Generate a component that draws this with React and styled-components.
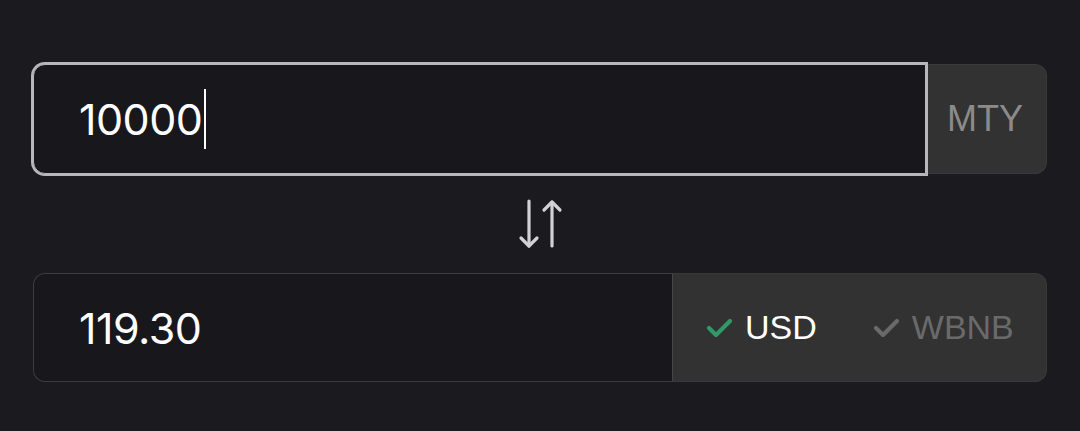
import styled, { createGlobalStyle } from "styled-components"

const GlobalStyle = createGlobalStyle`
    html, body {
        margin: 0;
        padding: 0;
        background: #1b1a1f;
    }
    body {
        font-family: "Inter", "Liberation Sans", sans-serif;
    }
`

const Page = styled.div`
    width: 1080px;
    height: 431px;
    box-sizing: border-box;
    padding: 64px 33px 0 33px;
    background: #1b1a1f;
    display: flex;
    flex-direction: column;
`

const Row = styled.div`
    display: flex;
    height: ${({ $height }) => $height}px;
`

const Field = styled.div`
    flex: ${({ $width }) => ($width ? `0 0 ${$width}px` : "1")};
    box-sizing: border-box;
    display: flex;
    align-items: center;
    padding-left: 45px;
    background: #18171c;
    border: 1px solid ${({ $focused }) => ($focused ? "#b8b7bc" : "#3c3b40")};
    border-right: ${({ $focused }) => ($focused ? "1px solid #b8b7bc" : "none")};
    border-radius: 12px 0 0 12px;
    box-shadow: ${({ $focused }) => ($focused ? "0 0 0 2px #b8b7bc" : "none")};
    position: relative;
    z-index: 1;
    color: #ffffff;
    font-size: 43px;
    font-weight: 400;
    letter-spacing: -0.5px;
`

const Caret = styled.span`
    display: inline-block;
    width: 2px;
    height: 60px;
    background: #ffffff;
    margin-left: 1px;
`

const Addon = styled.div`
    flex: 1;
    box-sizing: border-box;
    display: flex;
    align-items: center;
    justify-content: ${({ $center }) => ($center ? "center" : "flex-start")};
    gap: 56px;
    padding-left: ${({ $center }) => ($center ? "0" : "33px")};
    background: #323232;
    border: 1px solid #3a3a3a;
    border-left: ${({ $center }) => ($center ? "none" : "1px solid #45454a")};
    border-radius: 0 12px 12px 0;
    font-family: "Liberation Sans", Arial, sans-serif;
`

const Unit = styled.span`
    color: #8b8b8b;
    font-size: 36px;
    padding-right: 2px;
`

const Option = styled.span`
    display: flex;
    align-items: center;
    gap: 12px;
    font-size: 34px;
    color: ${({ $active }) => ($active ? "#ffffff" : "#6a6a6a")};
`

const SwapArea = styled.div`
    height: 99px;
    margin-left: -33px;
    margin-right: -33px;
    display: flex;
    justify-content: center;
    align-items: center;
`

const Check = ({ color }) => (
    <svg width="27" height="21" viewBox="0 0 27 21" fill="none">
        <path
            d="M3 11 L10 18 L24 4"
            stroke={color}
            strokeWidth="4.2"
            strokeLinecap="round"
            strokeLinejoin="round"
        />
    </svg>
)

const SwapIcon = () => (
    <svg width="48" height="52" viewBox="0 0 48 52" fill="none">
        <g stroke="#d2d1d6" strokeWidth="3.2" strokeLinecap="round" strokeLinejoin="round">
            <path d="M13 3 V48" />
            <path d="M5 40 L13 48 L21 40" />
            <path d="M36 4 V48" />
            <path d="M28 12 L36 4 L44 12" />
        </g>
    </svg>
)

const App = () => {
    return (
        <>
            <GlobalStyle />
            <Page>
                <Row $height={110}>
                    <Field $focused $width={893}>
                        10000
                        <Caret />
                    </Field>
                    <Addon $center>
                        <Unit>MTY</Unit>
                    </Addon>
                </Row>
                <SwapArea>
                    <SwapIcon />
                </SwapArea>
                <Row $height={109}>
                    <Field $width={639}>119.30</Field>
                    <Addon>
                        <Option $active>
                            <Check color="#2f9a68" />
                            USD
                        </Option>
                        <Option>
                            <Check color="#6a6a6a" />
                            WBNB
                        </Option>
                    </Addon>
                </Row>
            </Page>
        </>
    )
}

export default App
